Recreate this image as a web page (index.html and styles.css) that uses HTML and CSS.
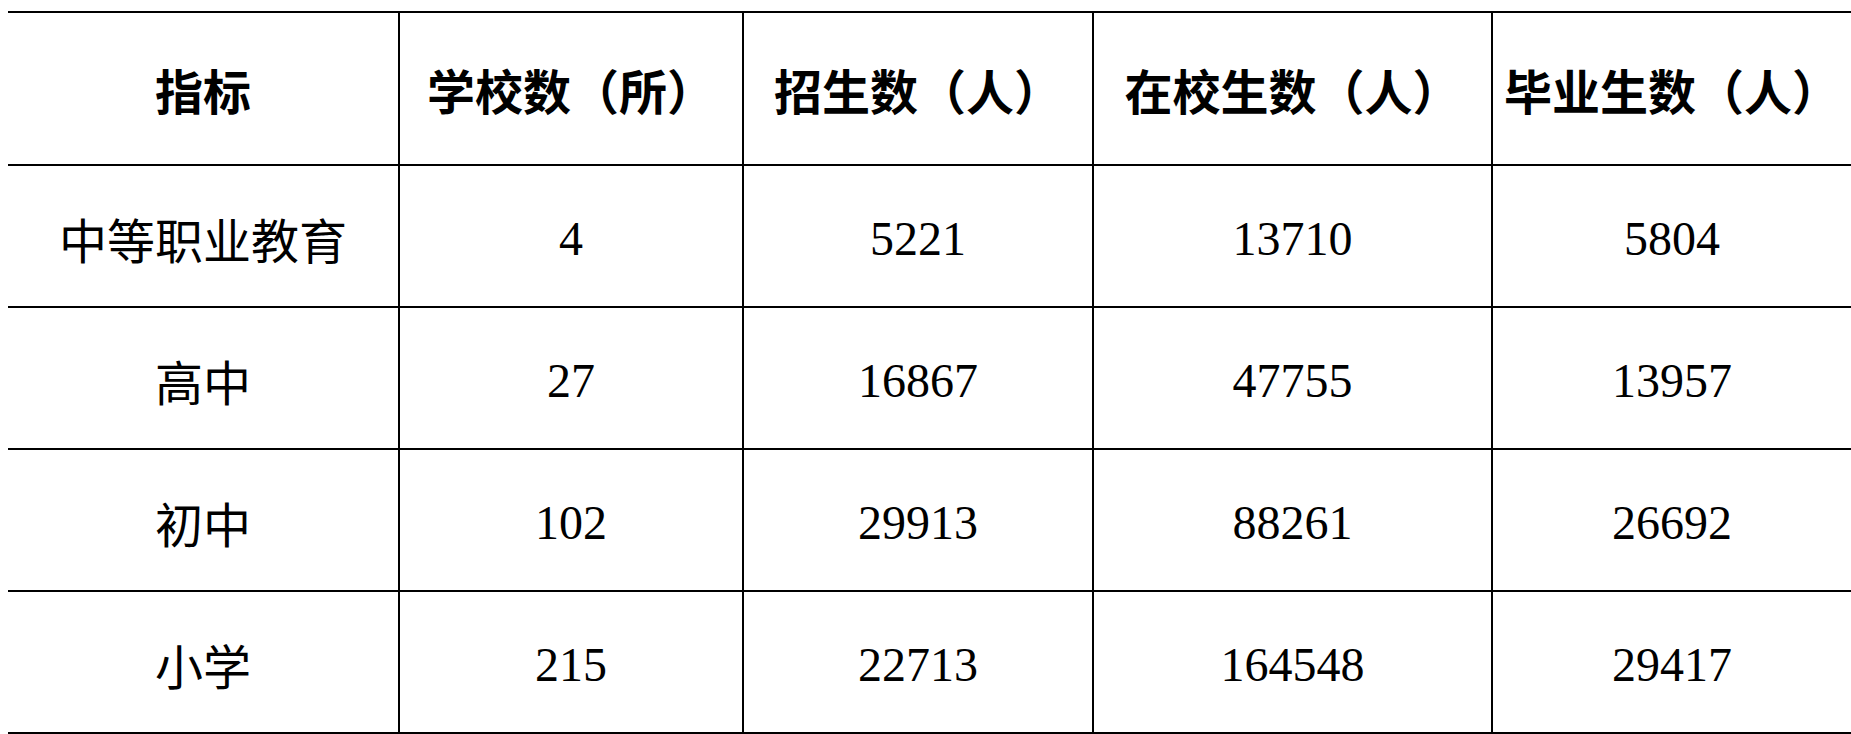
FILE: index.html
```html
<!DOCTYPE html>
<html lang="zh-CN">
<head>
<meta charset="utf-8">
<title>教育统计</title>
<link rel="stylesheet" href="styles.css">
</head>
<body>
<table class="stats">
  <colgroup>
    <col class="c1"><col class="c2"><col class="c3"><col class="c4"><col class="c5">
  </colgroup>
  <thead>
    <tr class="head">
      <th>指标</th>
      <th>学校数（所）</th>
      <th>招生数（人）</th>
      <th>在校生数（人）</th>
      <th>毕业生数（人）</th>
    </tr>
  </thead>
  <tbody>
    <tr><td>中等职业教育</td><td>4</td><td>5221</td><td>13710</td><td>5804</td></tr>
    <tr><td>高中</td><td>27</td><td>16867</td><td>47755</td><td>13957</td></tr>
    <tr><td>初中</td><td>102</td><td>29913</td><td>88261</td><td>26692</td></tr>
    <tr class="last"><td>小学</td><td>215</td><td>22713</td><td>164548</td><td>29417</td></tr>
  </tbody>
</table>
</body>
</html>
```
FILE: styles.css
```css
html, body {
  background: #ffffff;
}
body {
  margin: 11px 0 0 8px;
  font-family: "Liberation Serif", "Noto Sans CJK SC", serif;
  color: #000000;
}
.stats {
  width: 1843px;
  table-layout: fixed;
  border-collapse: separate;
  border-spacing: 0;
  border-top: 2px solid #000;
}
.c1 { width: 390px; }
.c2 { width: 344px; }
.c3 { width: 350px; }
.c4 { width: 399px; }
.c5 { width: 360px; }
.stats th,
.stats td {
  box-sizing: border-box;
  padding: 0;
  text-align: center;
  vertical-align: middle;
  font-size: 48px;
  line-height: 1;
  border-bottom: 2px solid #000;
  white-space: nowrap;
}
.stats th + th,
.stats td + td {
  border-left: 2px solid #000;
}
.stats th {
  height: 153px;
  font-weight: 700;
  padding-top: 11px;
}
.stats td {
  height: 142px;
  font-weight: 400;
  padding-top: 6px;
}
.stats td:first-child {
  padding-top: 14px;
}
```
